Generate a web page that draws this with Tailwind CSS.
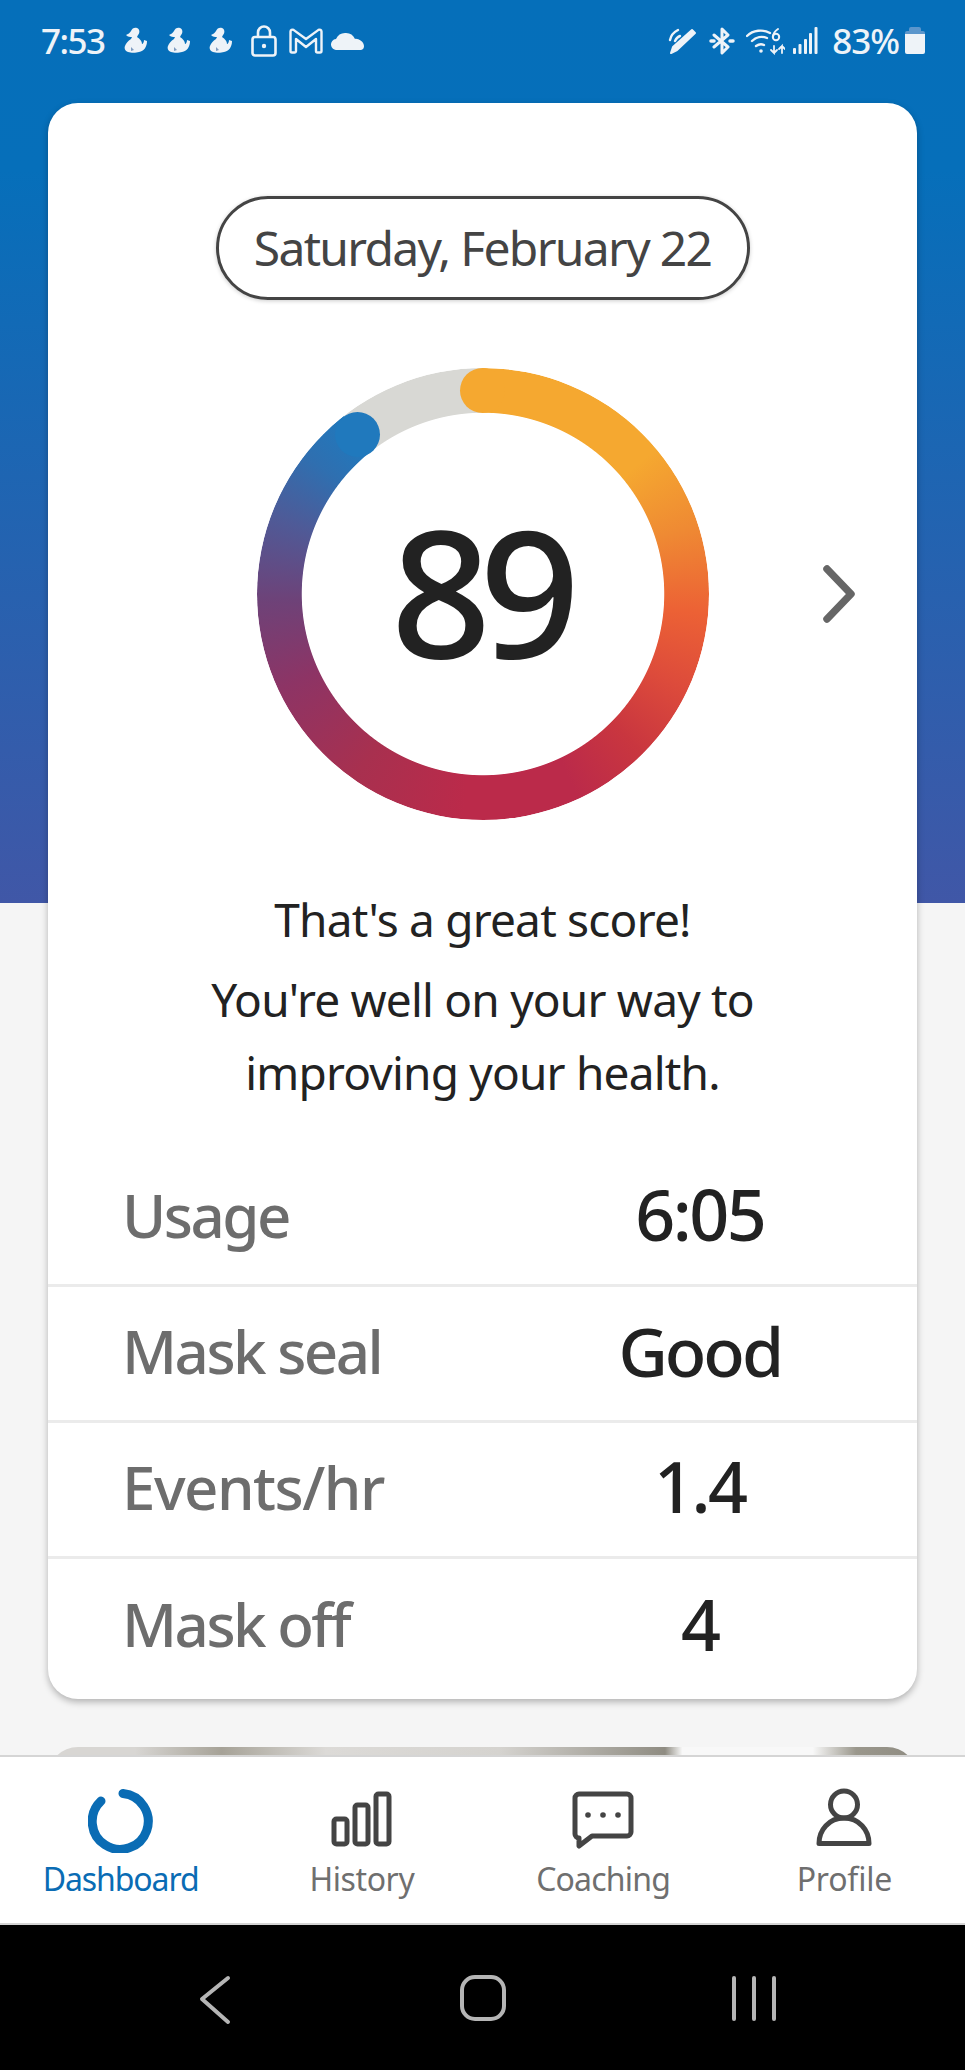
<!DOCTYPE html>
<html lang="en">
<head>
  <meta charset="UTF-8">
  <title>Dashboard</title>
  <script src="https://cdn.jsdelivr.net/npm/@tailwindcss/browser@4"></script>
</head>
<body class="bg-white [font-family:'Noto_Sans',sans-serif]">
  <svg class="hidden">
    <symbol id="duck" viewBox="0 0 24 28">
      <path d="M2 8c2-1 4-2 5-4 1-3 4-4 6-3 3 1 3 5 1 7l-1 2c3 2 5 4 5 7 1 0 2-2 2-4l3 1c0 6-3 10-8 11-3 1-8 1-11 0-3-1-4-4-3-6 1-3 3-5 6-7l1-2c-2 0-4 0-6-2z" fill="#eef3f8"/>
      <path d="M7 20l3 3-3 1z" fill="#7f9cc0"/>
    </symbol>
  </svg>

  <div class="w-[965px] h-[2070px] flex flex-col overflow-hidden">
    <main class="h-[1755px] overflow-hidden bg-[linear-gradient(#056fba_0,#066fba_170px,#4057a7_903px,#f5f5f5_903px)]">

      <!-- status bar -->
      <div class="h-[82px] pb-[1px] pl-[41px] pr-[40px] flex items-center text-[#eef3f8] text-[35px] leading-none font-medium">
        <span class="w-[83px] tracking-[-1.5px]">7:53</span>
        <svg class="w-[24px] h-[28px]"><use href="#duck"/></svg>
        <svg class="w-[24px] h-[28px] ml-[19px]"><use href="#duck"/></svg>
        <svg class="w-[24px] h-[28px] ml-[18px]"><use href="#duck"/></svg>
        <svg class="w-[26px] h-[32px] ml-[18px]" viewBox="0 0 26 32" fill="none" stroke="#eef3f8" stroke-width="2.6">
          <rect x="1.5" y="12" width="23" height="18.5" rx="2.5"/>
          <path d="M7 12V7.5a6 6 0 0 1 12 0V12"/>
          <circle cx="13" cy="21" r="2.2" fill="#eef3f8" stroke="none"/>
        </svg>
        <svg class="w-[34px] h-[26px] ml-[12px]" viewBox="0 0 34 26" fill="none" stroke="#eef3f8" stroke-width="2.4" stroke-linejoin="round">
          <path d="M1.5 3.5a2 2 0 0 1 3-1.600L17 11 29.500 1.900a2 2 0 0 1 3 1.600V23a1.500 1.500 0 0 1-1.500 1.500h-2.500a1.500 1.500 0 0 1-1.500-1.500V11L17 19 7 11v12a1.500 1.500 0 0 1-1.500 1.500H3A1.500 1.500 0 0 1 1.500 23z"/>
        </svg>
        <svg class="w-[34px] h-[19px] ml-[8px]" viewBox="0 0 34 19" fill="#eef3f8">
          <path d="M6 19a5.500 5.500 0 0 1-1-11 10 10 0 0 1 9-6 10 10 0 0 1 10 6c2-1 9 2 9 7a4 4 0 0 1-3 4z"/>
        </svg>

        <div class="ml-auto flex items-center">
          <svg class="w-[29px] h-[28px]" viewBox="0 0 29 28" fill="none" stroke="#eef3f8" stroke-linecap="round">
            <path d="M24 3l3 3L9 23l-6 3 2-6z" fill="#eef3f8" stroke-width="2" stroke-linejoin="round"/>
            <path d="M2 13C3 8 6 5 10 3M7 14c1-2 2-4 5-5" stroke-width="2.400"/>
          </svg>
          <svg class="w-[26px] h-[28px] ml-[12px]" viewBox="0 0 26 28" fill="none" stroke="#eef3f8" stroke-width="3" stroke-linejoin="round" stroke-linecap="round">
            <path d="M5 8 19 20l-6 6V2l6 6L5 20"/>
            <path d="M2 14h3M21 14h3" stroke-width="3.500"/>
          </svg>
          <svg class="w-[39px] h-[28px] ml-[11px]" viewBox="0 0 39 28" fill="none" stroke="#eef3f8" stroke-linecap="round" stroke-width="2.400">
            <path d="M1 9c6-6 16-7 23-3M6 14c4-4 10-5 15-3M10 19c3-2 6-2 8-1"/>
            <circle cx="15" cy="24" r="1.800" fill="#eef3f8" stroke="none"/>
            <path d="M28 19v7l-3-3m3 3 3-3M36 26v-7l-3 3m3-3 3 3" stroke-width="1.800"/>
            <circle cx="30" cy="10" r="3.200" stroke-width="2"/>
            <path d="M27 10c0-4 2-6 5-8" stroke-width="2"/>
          </svg>
          <svg class="w-[25px] h-[27px] ml-[8px]" viewBox="0 0 25 27" fill="#eef3f8">
            <rect x="0" y="21" width="3" height="6" rx="1"/>
            <rect x="5.500" y="17" width="3" height="10" rx="1"/>
            <rect x="11" y="12" width="3" height="15" rx="1"/>
            <rect x="16" y="6" width="3" height="21" rx="1"/>
            <rect x="21.500" y="0" width="3" height="27" rx="1"/>
          </svg>
          <span class="ml-[14px] tracking-[-1px]">83%</span>
          <svg class="w-[20px] h-[27px] ml-[6px]" viewBox="0 0 20 27">
            <path d="M6 0h8a2 2 0 0 1 2 2v2h2a2 2 0 0 1 2 2v3H0V6a2 2 0 0 1 2-2h2V2a2 2 0 0 1 2-2z" fill="#5b96cc"/>
            <path d="M0 7h20v18a2 2 0 0 1-2 2H2a2 2 0 0 1-2-2z" fill="#eef3f8"/>
          </svg>
        </div>
      </div>

      <!-- score card -->
      <section class="mx-[48px] mt-[21px] h-[1596px] bg-white rounded-[30px] shadow-[0_3px_7px_rgba(0,0,0,0.28)] overflow-hidden">
        <div class="pt-[93px] flex justify-center">
          <div class="w-[534px] h-[104px] rounded-full border-[3px] border-[#444] shadow-[0_1px_4px_rgba(0,0,0,0.2)] flex items-center justify-center text-[48px] font-[450] text-[#444] tracking-[-1.700px]">Saturday, February 22</div>
        </div>

        <div class="mt-[68px] grid grid-cols-[1fr_452px_1fr]">
          <div></div>
          <div class="relative h-[452px] flex items-center justify-center">
            <div class="absolute inset-0 rounded-full bg-[conic-gradient(#f5a830_0deg,#f5a830_50deg,#ef8a33_72deg,#ec6135_95deg,#dd4b3b_115deg,#c9363f_135deg,#bb2a4a_155deg,#bb2a4a_185deg,#a8304f_215deg,#8d3465_245deg,#6e4278_268deg,#4f5a97_290deg,#2f6fb0_308deg,#2079bd_322deg,#d8d8d4_322deg,#d8d8d4_360deg)] [mask-image:radial-gradient(closest-side,transparent_80%,black_80.400%)]"></div>
            <div class="absolute left-[203px] top-0 w-[45px] h-[45px] rounded-full bg-[#f5a830]"></div>
            <div class="absolute left-[78px] top-[44px] w-[45px] h-[45px] rounded-full bg-[#2079bd]"></div>
            <span class="relative pb-[8px] pr-[6px] text-[176px] font-medium leading-none text-[#222] tracking-[-12px]">89</span>
          </div>
          <div class="flex items-center ml-[113px]">
            <svg class="w-[34px] h-[60px]" viewBox="0 0 34 60" fill="none" stroke="#666" stroke-width="7.500" stroke-linecap="round" stroke-linejoin="round">
              <path d="M5 5 29 30 5 55"/>
            </svg>
          </div>
        </div>

        <div class="mt-[63px] text-center text-[46px] font-[450] leading-[73px] text-[#222] tracking-[-0.800px]">
          <p class="mb-[7px]">That's a great score!</p>
          <p>You're well on your way to<br>improving your health.</p>
        </div>

        <div class="mt-[42px]">
          <div class="h-[136px] pb-[6px] border-b-[3px] border-[#ebebeb] grid grid-cols-2 items-center">
            <span class="pl-[74px] text-[60px] font-medium text-[#6d6d6d] tracking-[-2.500px]">Usage</span>
            <span class="text-center text-[70px] font-medium text-[#222] tracking-[-2.500px]">6:05</span>
          </div>
          <div class="h-[136px] pb-[6px] border-b-[3px] border-[#ebebeb] grid grid-cols-2 items-center">
            <span class="pl-[74px] text-[60px] font-medium text-[#6d6d6d] tracking-[-2.500px]">Mask seal</span>
            <span class="text-center text-[68px] font-medium text-[#222] tracking-[-3px]">Good</span>
          </div>
          <div class="h-[136px] pb-[6px] border-b-[3px] border-[#ebebeb] grid grid-cols-2 items-center">
            <span class="pl-[74px] text-[60px] font-medium text-[#6d6d6d] tracking-[-1.500px]">Events/hr</span>
            <span class="text-center text-[70px] font-medium text-[#222] tracking-[-2.500px]">1.4</span>
          </div>
          <div class="h-[136px] pb-[6px] grid grid-cols-2 items-center">
            <span class="pl-[74px] text-[60px] font-medium text-[#6d6d6d] tracking-[-2.500px]">Mask off</span>
            <span class="text-center text-[70px] font-medium text-[#222] tracking-[-2.500px]">4</span>
          </div>
        </div>
      </section>

      <!-- next card, cut off by the nav -->
      <div class="mx-[48px] mt-[48px] h-[60px] rounded-t-[30px] bg-[linear-gradient(90deg,#d8d6d3_0%,#d8d6d3_10%,#a6a297_20%,#dcdad7_32%,#d5d3cf_52%,#8f8c82_71%,#f8f8f8_73%,#f8f8f8_88%,#9a978c_93%,#8f8c82_100%)]"></div>
    </main>

    <!-- bottom nav -->
    <nav class="h-[170px] border-y-[2px] border-[#d5d5d5] bg-white grid grid-cols-4 text-[32px] leading-none text-[#6f6f6f] tracking-[-0.8px]">
      <a class="flex flex-col items-center pt-[30px] text-[#0a6cb4]">
        <svg class="w-[66px] h-[66px]" viewBox="0 0 66 66" fill="none" stroke="#0a6cb4" stroke-width="9" stroke-linecap="round">
          <path d="M35 6.500A28 28 0 1 1 13 14"/>
        </svg>
        <span class="mt-[10px] tracking-[-1.1px]">Dashboard</span>
      </a>
      <a class="flex flex-col items-center pt-[34px]">
        <svg class="w-[62px] h-[56px] mb-[6px]" viewBox="0 0 62 56" fill="none" stroke="#444" stroke-width="5" stroke-linejoin="round">
          <rect x="3" y="28" width="13" height="25" rx="2.500"/>
          <rect x="24" y="14" width="13" height="39" rx="2.500"/>
          <rect x="45" y="3" width="13" height="50" rx="2.500"/>
        </svg>
        <span class="mt-[10px] tracking-[-0.4px]">History</span>
      </a>
      <a class="flex flex-col items-center pt-[34px]">
        <svg class="w-[62px] h-[58px] mb-[4px]" viewBox="0 0 62 58" fill="none" stroke="#444" stroke-width="5" stroke-linejoin="round">
          <path d="M7 3h48a4 4 0 0 1 4 4v34a4 4 0 0 1-4 4H20L7 55V47a4 4 0 0 1-4-4V7a4 4 0 0 1 4-4z"/>
          <circle cx="16" cy="24" r="2.800" fill="#444" stroke="none"/>
          <circle cx="31" cy="24" r="2.800" fill="#444" stroke="none"/>
          <circle cx="46" cy="24" r="2.800" fill="#444" stroke="none"/>
        </svg>
        <span class="mt-[10px]">Coaching</span>
      </a>
      <a class="flex flex-col items-center pt-[30px]">
        <svg class="w-[58px] h-[60px] mb-[6px]" viewBox="0 0 58 60" fill="none" stroke="#444" stroke-width="5" stroke-linejoin="round">
          <circle cx="29" cy="17.500" r="13.500"/>
          <path d="M4 56.500C4 43 14 31 29 31s25 12 25 25.500z"/>
        </svg>
        <span class="mt-[10px] tracking-[-0.2px]">Profile</span>
      </a>
    </nav>

    <!-- android buttons -->
    <div class="h-[145px] bg-black flex items-start pt-[50px] pl-[198px]">
      <svg class="w-[34px] h-[50px]" viewBox="0 0 34 50" fill="none" stroke="#b5b5b5" stroke-width="4" stroke-linecap="round" stroke-linejoin="round">
        <path d="M30 3 4 24l26 23"/>
      </svg>
      <div class="ml-[228px] w-[46px] h-[46px] rounded-[15px] border-[4px] border-[#b5b5b5]"></div>
      <div class="ml-[226px] mt-[1px] flex gap-[16px]">
        <div class="w-[4px] h-[45px] rounded-full bg-[#b5b5b5]"></div>
        <div class="w-[4px] h-[45px] rounded-full bg-[#b5b5b5]"></div>
        <div class="w-[4px] h-[45px] rounded-full bg-[#b5b5b5]"></div>
      </div>
    </div>
  </div>
</body>
</html>
